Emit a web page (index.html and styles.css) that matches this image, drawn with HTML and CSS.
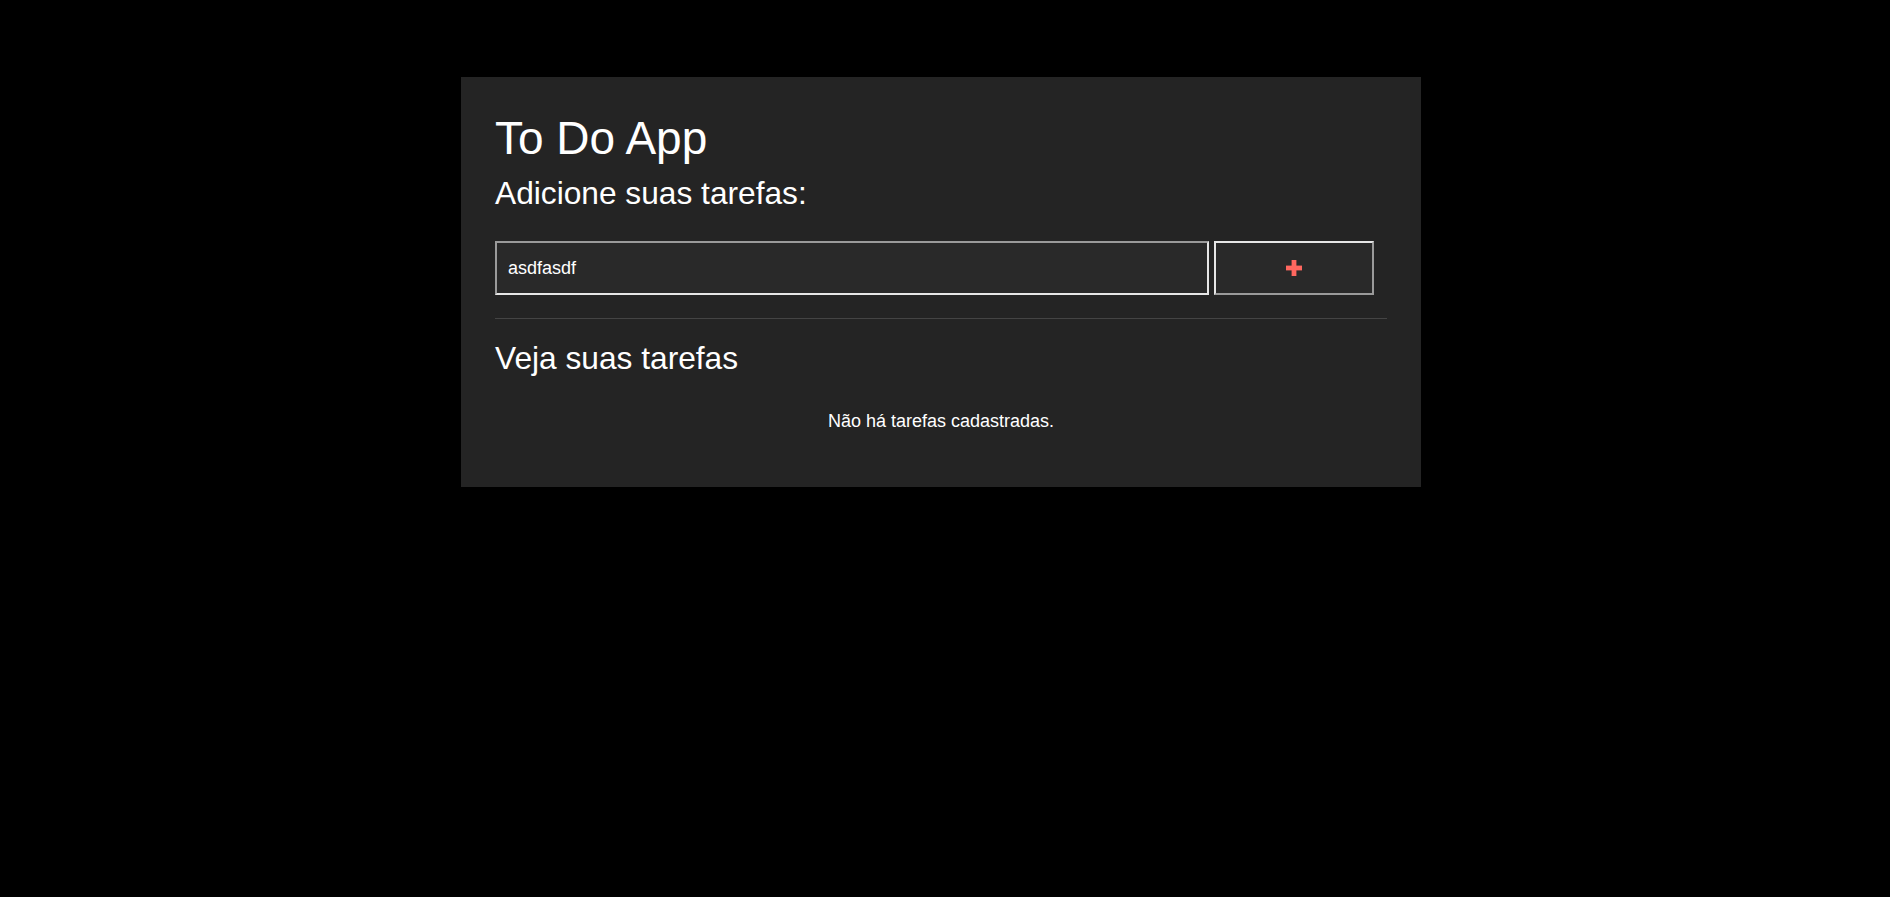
FILE: index.html
```html
<!DOCTYPE html>
<html lang="pt-BR">
<head>
<meta charset="utf-8">
<title>To Do App</title>
<link rel="stylesheet" href="styles.css">
</head>
<body>
<div class="page">
  <main class="card">
    <h1 class="title">To Do App</h1>
    <h2 class="subtitle">Adicione suas tarefas:</h2>
    <form class="add-row">
      <input class="task-input" type="text" value="asdfasdf">
      <button class="add-btn" type="button" aria-label="Adicionar">
        <svg class="plus" width="16" height="16" viewBox="0 0 16 16"><rect x="5.6" y="0" width="4.8" height="16" fill="#ff675f"/><rect x="0" y="5.6" width="16" height="4.8" fill="#ff675f"/></svg>
      </button>
    </form>
    <hr class="divider">
    <h2 class="list-title">Veja suas tarefas</h2>
    <p class="empty">Não há tarefas cadastradas.</p>
  </main>
</div>
</body>
</html>
```
FILE: styles.css
```css
html, body {
  margin: 0;
  padding: 0;
  background: #000;
}
body {
  font-family: "Liberation Sans", Arial, sans-serif;
  color: #fff;
}
.page {
  display: flex;
  justify-content: center;
  padding: 77px 8px 0 0;
}
.card {
  width: 960px;
  height: 410px;
  box-sizing: border-box;
  background: #242424;
  padding: 35px 34px 36px 34px;
}
.title {
  margin: 0;
  font-size: 46px;
  font-weight: normal;
  line-height: 1.15;
}
.subtitle {
  margin: 10px 0 0;
  font-size: 31.7px;
  font-weight: normal;
  line-height: 1.15;
}
.add-row {
  display: flex;
  gap: 5px;
  margin: 30px 0 0;
}
.task-input {
  box-sizing: border-box;
  width: 714px;
  height: 54px;
  padding: 0 11px;
  background: #292929;
  color: #fff;
  font-family: "Liberation Sans", Arial, sans-serif;
  font-size: 18px;
  border: 2px solid;
  border-color: #9a9a9a #e6e6e6 #e6e6e6 #9a9a9a;
  outline: none;
  margin: 0;
}
.add-btn {
  box-sizing: border-box;
  width: 160px;
  height: 54px;
  margin: 0;
  padding: 0;
  background: #292929;
  border: 2px solid;
  border-color: #e6e6e6 #9a9a9a #9a9a9a #e6e6e6;
  display: flex;
  align-items: center;
  justify-content: center;
}
.plus {
  display: block;
}
.divider {
  border: 0;
  border-top: 1px solid #444;
  margin: 23px 0 0;
  height: 0;
}
.list-title {
  margin: 21px 0 0;
  font-size: 31.7px;
  font-weight: normal;
  line-height: 1.15;
}
.empty {
  margin: 34px 0 0;
  text-align: center;
  font-size: 18px;
  line-height: 1.15;
}
```
